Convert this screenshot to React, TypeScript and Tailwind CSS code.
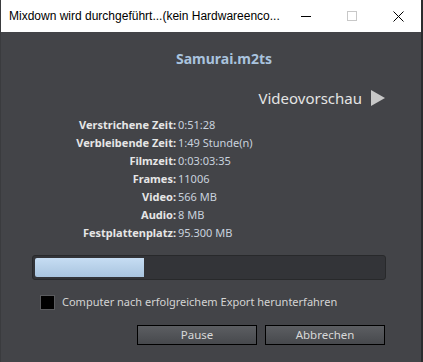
import React from 'react';

const stats: [string, string][] = [
  ['Verstrichene Zeit:', '0:51:28'],
  ['Verbleibende Zeit:', '1:49 Stunde(n)'],
  ['Filmzeit:', '0:03:03:35'],
  ['Frames:', '11006'],
  ['Video:', '566 MB'],
  ['Audio:', '8 MB'],
  ['Festplattenplatz:', '95.300 MB'],
];

export default function App() {
  return (
    <div className="w-[423px] h-[362px] bg-[#2b2c2e] overflow-hidden" style={{ fontFamily: '"Noto Sans", sans-serif' }}>
      <div className="w-[421px] h-[362px] flex flex-col bg-[#434448] border-l border-[#3a3b3e]">
        {/* Title bar */}
        <div className="h-8 bg-white flex items-center shrink-0">
          <span className="pl-2 text-[12px] text-black flex-1 whitespace-nowrap" style={{ fontFamily: '"Liberation Sans", sans-serif' }}>
            Mixdown wird durchgeführt...(kein Hardwareenco...
          </span>
          <div className="flex items-center">
            <div className="w-[46px] flex justify-center">
              <div className="w-[10px] h-px bg-black" />
            </div>
            <div className="w-[46px] flex justify-center">
              <div className="w-[10px] h-[10px] border border-[#c8c8c8]" />
            </div>
            <div className="w-[46px] flex justify-center">
              <svg width="11" height="11" viewBox="0 0 11 11">
                <path d="M0.5 0.5 L10.5 10.5 M10.5 0.5 L0.5 10.5" stroke="#000" strokeWidth="1" />
              </svg>
            </div>
          </div>
        </div>

        {/* Body */}
        <div className="flex flex-col">
          <div className="pt-[18px] pl-[26px] text-center text-[14px] font-bold text-[#a9c3de] leading-[18px]">Samurai.m2ts</div>

          <div className="mt-[20px] flex items-center justify-end pr-[36px] gap-[9px]">
            <span className="text-[15px] text-[#e4e4e4] leading-[20px]">Videovorschau</span>
            <svg width="14" height="16" viewBox="0 0 14 16">
              <path d="M0 0 L14 8 L0 16 Z" fill="#c8c8c8" />
            </svg>
          </div>

          <div className="mt-[8px] flex flex-col">
            {stats.map(([k, v]) => (
              <div key={k} className="flex h-[18px] items-center text-[11px] leading-[18px]">
                <span className="w-[175px] text-right font-bold text-[#e6e6e6]">{k}</span>
                <span className="pl-[2px] text-[#c9d2de]">{v}</span>
              </div>
            ))}
          </div>

          {/* Progress */}
          <div className="mt-[13px] ml-[31px] w-[354px] h-[25px] rounded-[3px] bg-[#333438] border border-[#28292b] p-[2px] flex">
            <div className="w-[109px] h-full rounded-l-[2px] bg-gradient-to-b from-[#c6ddf3] to-[#a9c4df]" />
          </div>

          <div className="mt-[14px] ml-[39px] flex items-center gap-[7px]">
            <div className="w-[15px] h-[15px] bg-black border border-[#5a5b5e]" />
            <span className="text-[11px] text-[#d4d4d4]">Computer nach erfolgreichem Export herunterfahren</span>
          </div>

          <div className="mt-[14px] flex justify-end pr-[36px] gap-[8px]">
            {['Pause', 'Abbrechen'].map((t) => (
              <button key={t} className="w-[120px] h-[20px] border border-black bg-gradient-to-b from-[#5c5e62] to-[#47494d] text-[11.5px] text-[#d8d8d8] leading-[18px]">
                {t}
              </button>
            ))}
          </div>
        </div>
      </div>
    </div>
  );
}
